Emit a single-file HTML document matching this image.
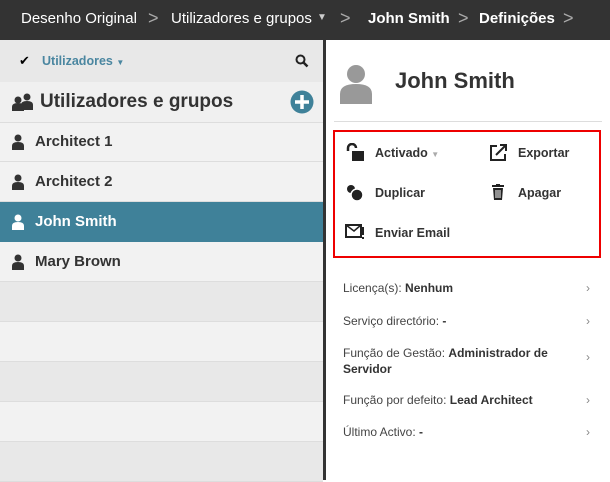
<html><head><style>
body{margin:0;width:610px;height:480px;overflow:hidden;font-family:"Liberation Sans",sans-serif;background:#fff;position:relative}
.a{position:absolute}
.top{left:0;top:0;width:610px;height:40px;background:#333;color:#fff;font-size:15px}
.top span{position:absolute;top:10px}
.chev{color:#aaa;font-size:18px}
.left{left:0;top:40px;width:323px;height:440px;background:#f2f2f2}
.sep{left:323px;top:40px;width:3px;height:440px;background:#333}
.row{position:absolute;left:0;width:323px;height:39px;border-bottom:1px solid #ddd;font-size:15px;font-weight:bold;color:#333}
.row span{position:absolute;left:35px;top:11px}
.p{position:absolute;left:12px;top:12px}
.act{position:absolute;font-size:12.5px;font-weight:bold;color:#333}
.det{position:absolute;left:343px;font-size:12px;color:#444;width:240px;line-height:16px}
.det b{color:#333}
.det i{position:absolute;left:243px;top:0;font-style:normal;color:#888}
</style></head><body>
<div class="a top">
<span style="left:21px">Desenho Original</span><span class="chev" style="left:148px;top:8px">&gt;</span>
<span style="left:171px">Utilizadores e grupos</span><span style="left:317px;top:12px;font-size:10px;color:#ccc">▼</span>
<span class="chev" style="left:340px;top:8px">&gt;</span>
<span style="left:368px;font-weight:bold">John Smith</span><span class="chev" style="left:458px;top:8px">&gt;</span>
<span style="left:479px;font-weight:bold">Definições</span><span class="chev" style="left:563px;top:8px">&gt;</span>
</div>
<div class="a left">
<div class="a" style="left:0;top:0;width:323px;height:42px;background:#e8e8e8"></div>
<div class="a" style="left:19px;top:13px;font-size:13px">✔</div>
<div class="a" style="left:42px;top:14px;font-size:12.5px;font-weight:bold;color:#4a86a0">Utilizadores <span style="font-size:8px">▼</span></div>
<svg class="a" style="left:295px;top:14px" width="14" height="14"><circle cx="5.5" cy="5.5" r="4" stroke="#222" stroke-width="2" fill="none"/><path d="M8.5 8.5L12.5 12.5" stroke="#222" stroke-width="2.5"/></svg>
<div class="a" style="left:0;top:42px;width:323px;height:40px;background:#f0f0f0;border-bottom:1px solid #ddd"></div>
<svg class="a" style="left:11px;top:53px" width="24" height="18"><circle cx="16" cy="4" r="3.5" fill="#333"/><path d="M10 17v-5q0-4 6-4t6 4v5z" fill="#333"/><circle cx="7" cy="7" r="3.5" fill="#333"/><path d="M1 18v-4q0-4 6-4t6 4v4z" fill="#333"/></svg>
<div class="a" style="left:40px;top:51px;font-size:19px;font-weight:bold;color:#333">Utilizadores e grupos</div>
<svg class="a" style="left:290px;top:50px" width="24" height="24"><circle cx="12" cy="12" r="11.5" fill="#3f8199"/><path d="M12 5v14M5 12h14" stroke="#fff" stroke-width="3.5"/></svg>
<div class="row" style="top:82px"><svg class="p" width="12" height="16"><circle cx="6" cy="4" r="3.5" fill="#333"/><path d="M0 16v-4q0-4 6-4t6 4v4z" fill="#333"/></svg><span>Architect 1</span></div>
<div class="row" style="top:122px"><svg class="p" width="12" height="16"><circle cx="6" cy="4" r="3.5" fill="#333"/><path d="M0 16v-4q0-4 6-4t6 4v4z" fill="#333"/></svg><span>Architect 2</span></div>
<div class="row" style="top:162px;background:#3f8199;color:#fff;border-color:#3f8199"><svg class="p" width="12" height="16"><circle cx="6" cy="4" r="3.5" fill="#fff"/><path d="M0 16v-4q0-4 6-4t6 4v4z" fill="#fff"/></svg><span>John Smith</span></div>
<div class="row" style="top:202px;background:#f2f2f2"><svg class="p" width="12" height="16"><circle cx="6" cy="4" r="3.5" fill="#333"/><path d="M0 16v-4q0-4 6-4t6 4v4z" fill="#333"/></svg><span>Mary Brown</span></div>
<div class="row" style="top:242px;background:#e8e8e8"></div>
<div class="row" style="top:282px;background:#f2f2f2"></div>
<div class="row" style="top:322px;background:#e8e8e8"></div>
<div class="row" style="top:362px;background:#f2f2f2"></div>
<div class="row" style="top:402px;background:#e8e8e8"></div>
</div>
<div class="a sep"></div>
<svg class="a" style="left:340px;top:64px" width="32" height="40"><circle cx="16" cy="10" r="9" fill="#999"/><path d="M0 40v-10q0-10 16-10t16 10v10z" fill="#999"/></svg>
<div class="a" style="left:395px;top:68px;font-size:22px;font-weight:bold;color:#333">John Smith</div>
<div class="a" style="left:334px;top:121px;width:268px;height:1px;background:#ddd"></div>
<div class="a" style="left:333px;top:130px;width:264px;height:124px;border:2px solid #e00"></div>
<svg class="a" style="left:345px;top:143px" width="20" height="19"><path d="M3 8V5a4 4 0 0 1 8 0" stroke="#222" stroke-width="2.5" fill="none"/><rect x="7" y="8" width="12" height="10" fill="#222"/></svg>
<div class="act" style="left:375px;top:146px">Activado <span style="color:#aaa;font-size:8px">▼</span></div>
<svg class="a" style="left:489px;top:144px" width="18" height="18"><path d="M8 2H2v14h14v-6" stroke="#222" stroke-width="2" fill="none"/><path d="M7 11L16 2M11 1h6v6" stroke="#222" stroke-width="2" fill="none"/></svg>
<div class="act" style="left:518px;top:146px">Exportar</div>
<svg class="a" style="left:346px;top:184px" width="18" height="18"><circle cx="5" cy="5" r="4" fill="#222"/><circle cx="11" cy="11" r="6" fill="#222" stroke="#fff" stroke-width="1.5"/></svg>
<div class="act" style="left:375px;top:186px">Duplicar</div>
<svg class="a" style="left:491px;top:184px" width="14" height="16"><path d="M1 2h12M5 1h4" stroke="#222" stroke-width="2"/><path d="M2 4h10l-1 12H3z" fill="#222"/><path d="M5 6v8M7 6v8M9 6v8" stroke="#fff" stroke-width="1"/></svg>
<div class="act" style="left:518px;top:186px">Apagar</div>
<svg class="a" style="left:345px;top:223px" width="20" height="18"><rect x="1" y="2" width="15" height="12" stroke="#222" stroke-width="2" fill="none"/><path d="M1 2l8 6 7-6" stroke="#222" stroke-width="1.5" fill="none"/><rect x="17" y="4" width="2" height="8" fill="#222"/><rect x="17" y="14" width="2" height="2" fill="#222"/></svg>
<div class="act" style="left:375px;top:226px">Enviar Email</div>
<div class="det" style="top:280px">Licença(s): <b>Nenhum</b><i>›</i></div>
<div class="det" style="top:313px">Serviço directório: <b>-</b><i>›</i></div>
<div class="det" style="top:345px">Função de Gestão: <b>Administrador de Servidor</b><i style="top:4px">›</i></div>
<div class="det" style="top:392px">Função por defeito: <b>Lead Architect</b><i>›</i></div>
<div class="det" style="top:424px">Último Activo: <b>-</b><i>›</i></div>
</body></html>
